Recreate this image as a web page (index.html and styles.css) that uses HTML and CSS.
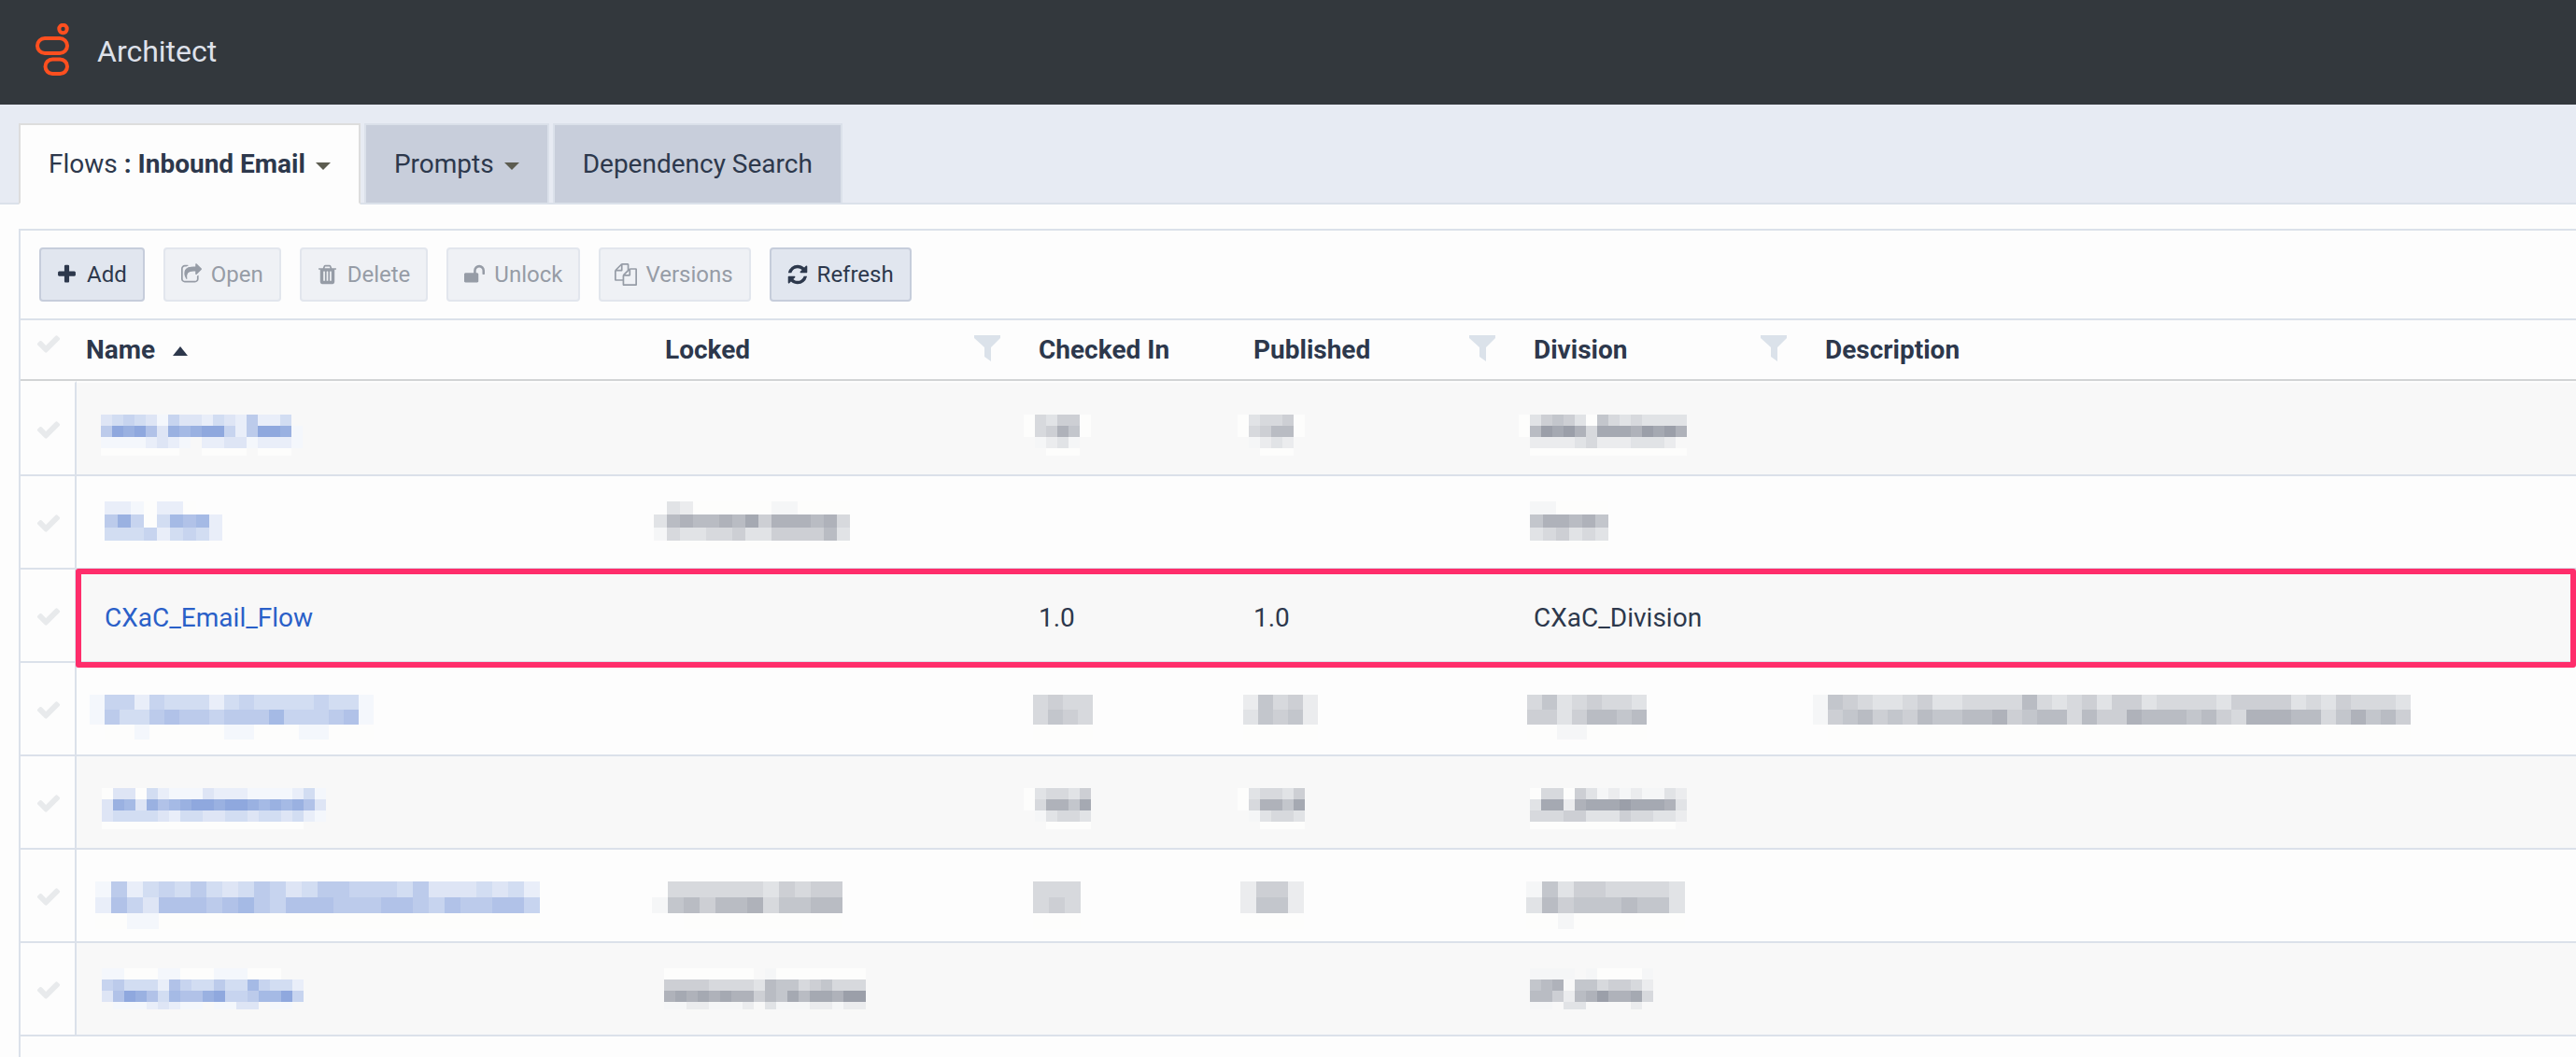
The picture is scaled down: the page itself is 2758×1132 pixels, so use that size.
FILE: index.html
```html
<!DOCTYPE html>
<html lang="en">
<head>
<meta charset="utf-8">
<title>Architect</title>
<link rel="stylesheet" href="styles.css">
</head>
<body>
<svg class="defs" aria-hidden="true">
  <symbol id="check" viewBox="0 0 1792 1792"><path d="M1671 566q0 40-28 68l-724 724-136 136q-28 28-68 28t-68-28l-136-136-362-362q-28-28-28-68t28-68l136-136q28-28 68-28t68 28l294 295 656-657q28-28 68-28t68 28l136 136q28 28 28 68z"/></symbol>
  <symbol id="funnel" viewBox="0 0 28 28"><path d="M0 0h28v3l-10 10v15l-7-5v-10L0 3z"/></symbol>
  <symbol id="caret" viewBox="0 0 16 8"><path d="M0 0h16L8 8z"/></symbol>
</svg>

<header class="topbar">
  <svg class="logo" viewBox="0 0 36 56" aria-hidden="true">
    <circle cx="29.5" cy="6" r="4.2"/>
    <rect x="2" y="16" width="32" height="16" rx="8"/>
    <rect x="10.500" y="38.500" width="23.500" height="15.500" rx="7.700"/>
  </svg>
  <h1 class="title">Architect</h1>
</header>

<nav class="tabs">
  <button class="tab active" type="button"><span>Flows <b>: Inbound Email</b></span><svg class="caret"><use href="#caret"/></svg></button>
  <button class="tab" type="button"><span>Prompts</span><svg class="caret"><use href="#caret"/></svg></button>
  <button class="tab" type="button">Dependency Search</button>
</nav>

<main class="panel">
  <div class="toolbar">
    <button class="btn" type="button"><svg width="19" height="24" viewBox="192 0 1408 1792"><path d="M1600 736v192q0 40-28 68t-68 28h-416v416q0 40-28 68t-68 28h-192q-40 0-68-28t-28-68v-416h-416q-40 0-68-28t-28-68v-192q0-40 28-68t68-28h416v-416q0-40 28-68t68-28h192q40 0 68 28t28 68v416h416q40 0 68 28t28 68z"/></svg>Add</button>
    <button class="btn" type="button" disabled><svg class="wide" width="22" height="24" viewBox="64 0 1664 1792"><path d="M1472 989v259q0 119-84.500 203.500t-203.500 84.500h-832q-119 0-203.500-84.500t-84.500-203.500v-832q0-119 84.500-203.500t203.500-84.500h255q13 0 22.500 9.500t9.500 22.500q0 27-26 32-77 26-133 60-10 4-16 4h-112q-66 0-113 47t-47 113v832q0 66 47 113t113 47h832q66 0 113-47t47-113v-214q0-19 18-29 28-13 54-37 16-16 35-8 21 9 21 29zm237-496l-384 384q-18 19-45 19-12 0-25-5-39-17-39-59v-192h-160q-323 0-438 131-119 137-74 473 3 23-20 34-8 2-12 2-16 0-26-13-10-14-21-31t-39.500-68.500-49.500-99.500-38.500-114-17.500-122q0-49 3.500-91t14-90 28-88 47-81.500 68.500-74 94.500-61.500 124.500-48.500 159.500-30.500 196.500-11h160v-192q0-42 39-59 13-5 25-5 26 0 45 19l384 384q19 19 19 45t-19 45z"/></svg>Open</button>
    <button class="btn" type="button" disabled><svg width="19" height="24" viewBox="192 0 1408 1792"><path d="M704 1376v-704q0-14-9-23t-23-9h-64q-14 0-23 9t-9 23v704q0 14 9 23t23 9h64q14 0 23-9t9-23zm256 0v-704q0-14-9-23t-23-9h-64q-14 0-23 9t-9 23v704q0 14 9 23t23 9h64q14 0 23-9t9-23zm256 0v-704q0-14-9-23t-23-9h-64q-14 0-23 9t-9 23v704q0 14 9 23t23 9h64q14 0 23-9t9-23zm-544-992h448l-48-117q-7-9-17-11h-317q-10 2-17 11zm928 32v64q0 14-9 23t-23 9h-96v948q0 83-47 143.500t-113 60.500h-832q-66 0-113-58.500t-47-141.500v-952h-96q-14 0-23-9t-9-23v-64q0-14 9-23t23-9h309l70-167q15-37 54-63t79-26h320q40 0 79 26t54 63l70 167h309q14 0 23 9t9 23z"/></svg>Delete</button>
    <button class="btn" type="button" disabled><svg class="wide" width="22" height="24" viewBox="64 0 1664 1792"><path d="M1728 576v256q0 26-19 45t-45 19h-64q-26 0-45-19t-19-45v-256q0-106-75-181t-181-75-181 75-75 181v192h96q40 0 68 28t28 68v576q0 40-28 68t-68 28h-960q-40 0-68-28t-28-68v-576q0-40 28-68t68-28h672v-192q0-185 131.500-316.500t316.500-131.500 316.500 131.500 131.500 316.500z"/></svg>Unlock</button>
    <button class="btn" type="button" disabled><svg class="widest" width="24" height="24" viewBox="0 0 1792 1792"><path d="M1696 384q40 0 68 28t28 68v1216q0 40-28 68t-68 28h-960q-40 0-68-28t-28-68v-288h-544q-40 0-68-28t-28-68v-672q0-40 20-88t48-76l408-408q28-28 76-48t88-20h416q40 0 68 28t28 68v328q68-40 128-40h416zm-544 213l-299 299h299v-299zm-640-384l-299 299h299v-299zm196 647l316-316v-416h-384v416q0 40-28 68t-68 28h-416v640h512v-256q0-40 20-88t48-76zm956 804v-1152h-384v416q0 40-28 68t-68 28h-416v640h896z"/></svg>Versions</button>
    <button class="btn" type="button"><svg class="wide" width="22" height="24" viewBox="128 0 1536 1792"><path d="M1639 1056q0 5-1 7-64 268-268 434.500t-478 166.500q-146 0-282.500-55t-243.500-157l-129 129q-19 19-45 19t-45-19-19-45v-448q0-26 19-45t45-19h448q26 0 45 19t19 45-19 45l-137 137q71 66 161 102t187 36q134 0 250-65t186-179q11-17 53-117 8-23 30-23h192q13 0 22.500 9.500t9.500 22.500zm25-800v448q0 26-19 45t-45 19h-448q-26 0-45-19t-19-45 19-45l138-138q-148-137-349-137-134 0-250 65t-186 179q-11 17-53 117-8 23-30 23h-199q-13 0-22.500-9.500t-9.500-22.500v-7q65-268 270-434.500t480-166.500q146 0 284 55.500t245 156.500l130-129q19-19 45-19t45 19 19 45z"/></svg>Refresh</button>
  </div>

  <table class="flows">
    <colgroup><col class="c-check"><col class="c-name"><col class="c-locked"><col class="c-checked"><col class="c-published"><col class="c-division"><col></colgroup>
    <thead>
      <tr>
        <th class="pick"><label><input type="checkbox" aria-label="Select all"><svg><use href="#check"/></svg></label></th>
        <th>Name <svg class="sort" viewBox="0 0 16 10"><path d="M0 10h16L8 0z"/></svg></th>
        <th><div class="head"><span>Locked</span><svg class="funnel"><use href="#funnel"/></svg></div></th>
        <th>Checked In</th>
        <th><div class="head"><span>Published</span><svg class="funnel"><use href="#funnel"/></svg></div></th>
        <th><div class="head"><span>Division</span><svg class="funnel"><use href="#funnel"/></svg></div></th>
        <th>Description</th>
      </tr>
    </thead>
    <tbody>
      <tr>
        <td class="pick"><label><input type="checkbox" aria-label="Select flow 1"><svg><use href="#check"/></svg></label></td>
        <td class="masked"><svg class="blue" data-cell="12" data-x="26" data-rows="23432042213215113. 598962878994159980 00001210.112201110 wwwwwww..wwww.www."></svg></td>
        <td></td>
        <td class="masked"><svg data-cell="12" data-x="-6" data-rows="w3244w w3475w .0120. ..www."></svg></td>
        <td class="masked"><svg data-cell="12" data-x="-7" data-rows="w2334w w3466w .0121. ..www."></svg></td>
        <td class="masked"><svg data-cell="12" data-x="-6" data-rows="w24542w53232222. w69897388879897. .1111231112221.. .wwwwwwwwwwwwww."></svg></td>
        <td></td>
      </tr>
      <tr class="high">
        <td class="pick"><label><input type="checkbox" aria-label="Select flow 2"><svg><use href="#check"/></svg></label></td>
        <td class="masked"><svg class="blue" data-cell="14" data-x="30" data-rows="110w11w.. 584w37671 333413431 wwwwwwww."></svg></td>
        <td class="masked"><svg data-cell="14" data-x="-2" data-rows=".21wwwwww00wwww 267667684777673 032233422444462 .wwwwwwwwwwwwww"></svg></td>
        <td></td>
        <td></td>
        <td class="masked"><svg data-cell="14" data-x="6" data-rows="00wwww 577675 234232 wwwwww"></svg></td>
        <td></td>
      </tr>
      <tr class="marked">
        <td class="pick"><label><input type="checkbox" aria-label="Select CXaC_Email_Flow"><svg><use href="#check"/></svg></label></td>
        <td class="name"><a href="#">CXaC_Email_Flow</a></td>
        <td></td>
        <td>1.0</td>
        <td>1.0</td>
        <td>CXaC_Division</td>
        <td></td>
      </tr>
      <tr>
        <td class="pick"><label><input type="checkbox" aria-label="Select flow 4"><svg><use href="#check"/></svg></label></td>
        <td class="masked"><svg class="blue" data-cell="16" data-x="14" data-rows="0441433313433334330 0533565545557444560 .ww0wwwww00www00www"></svg></td>
        <td></td>
        <td class="masked"><svg data-cell="16" data-x="4" data-rows="3433 3543 wwww"></svg></td>
        <td class="masked"><svg data-cell="16" data-x="-1" data-rows="15341 25451 wwwww"></svg></td>
        <td class="masked"><svg data-cell="16" data-x="3" data-rows="35234332 44246656 ww00wwww"></svg></td>
        <td class="masked"><svg data-cell="16" data-x="-3" data-rows="0543223422333363234244233332444423243332 0456454655667456636447666564377766357564 .wwwwwwwwwwwwwwwwwwwwwwwwwwwwwwwwwwwwwww"></svg></td>
      </tr>
      <tr>
        <td class="pick"><label><input type="checkbox" aria-label="Select flow 5"><svg><use href="#check"/></svg></label></td>
        <td class="masked"><svg class="blue" data-cell="12" data-x="27" data-rows="w22w3100021110000130 28728678998998787862 23333213322332332310 wwwwwwwwwwwwwwwwww.."></svg></td>
        <td></td>
        <td class="masked"><svg data-cell="12" data-x="-6" data-rows="w23324 w37758 .02332 ..wwww"></svg></td>
        <td class="masked"><svg data-cell="12" data-x="-7" data-rows="w23324 w37758 .02332 ..wwww"></svg></td>
        <td class="masked"><svg data-cell="12" data-x="6" data-rows="w33w4201010021 28817888988872 33344222433221 wwwwwwwwwwwww."></svg></td>
        <td></td>
      </tr>
      <tr>
        <td class="pick"><label><input type="checkbox" aria-label="Select flow 6"><svg><use href="#check"/></svg></label></td>
        <td class="masked"><svg class="blue" data-cell="17" data-x="20" data-rows="0513435323542355444352223231 1642666567546665556654655664 ww00wwwwwwwwwwwwwwwwwwwwwwww"></svg></td>
        <td class="masked"><svg data-cell="17" data-x="-4" data-rows=".33333324344 056466735566 ..wwwwwwwwww"></svg></td>
        <td class="masked"><svg data-cell="17" data-x="4" data-rows="333 343 www"></svg></td>
        <td class="masked"><svg data-cell="17" data-x="-4" data-rows="1441 1551 wwww"></svg></td>
        <td class="masked"><svg data-cell="17" data-x="2" data-rows="0524433332 2645556552 ww0wwwwwww"></svg></td>
        <td></td>
      </tr>
      <tr class="high">
        <td class="pick"><label><input type="checkbox" aria-label="Select flow 7"><svg><use href="#check"/></svg></label></td>
        <td class="masked"><svg class="blue" data-cell="12" data-x="27" data-rows="00www00www000www.. 453331643353374331 269863766894457794 .00012100.0022.00."></svg></td>
        <td class="masked"><svg data-cell="12" data-x="9" data-rows="wwwwwwww.0wwwwwwww 444433332655345333 787878774658688799 00110001.200011011"></svg></td>
        <td></td>
        <td></td>
        <td class="masked"><svg data-cell="12" data-x="6" data-rows="0000.0wwww0 567.5534431 66416797783 00.22....1."></svg></td>
        <td></td>
      </tr>
    </tbody>
  </table>
</main>
<script src="mosaic.js"></script>
</body>
</html>
```
FILE: styles.css
```css
* { box-sizing: border-box; }

body {
  margin: 0;
  min-height: 100vh;
  display: flex;
  flex-direction: column;
  background: #fdfdfd;
  color: #2d384c;
  font: 28px/32px Roboto, "Liberation Sans", sans-serif;
}

button { font: inherit; color: inherit; margin: 0; }
svg { display: block; flex: none; fill: currentColor; }
.defs { position: absolute; width: 0; height: 0; }

.topbar {
  display: flex;
  align-items: center;
  gap: 30px;
  height: 112px;
  padding: 0 38px 6px;
  background: #33383d;
}
.logo { width: 36px; height: 56px; fill: none; stroke: #ff4f1f; stroke-width: 4; }
.title { margin: 0; padding-top: 4px; font-size: 32px; font-weight: 400; color: #dee1ea; }

.tabs {
  display: flex;
  gap: 4px;
  padding: 20px 20px 0;
  background: #e7ebf3;
  box-shadow: inset 0 -2px #dbe1ea;
}
.tab {
  display: flex;
  align-items: center;
  gap: 11px;
  height: 87px;
  padding: 0 30px;
  border: 2px solid #dbe1ea;
  background: #c8cedb;
}
.tab.active { background: #fdfdfd; border-color: #ddd; border-bottom-color: #fdfdfd; }
.caret { width: 16px; height: 8px; margin-top: 4px; color: #5c5c50; }

.panel {
  flex: 1;
  margin: 26px 0 0 20px;
  border: solid #dbe1ea;
  border-width: 2px 0 0 2px;
}
.toolbar {
  display: flex;
  gap: 20px;
  padding: 18px 20px;
  border-bottom: 2px solid #dbe1ea;
}
.btn {
  display: flex;
  align-items: center;
  gap: 12px;
  height: 58px;
  padding: 0 17px 0 18px;
  border: 2px solid #c6cddb;
  border-radius: 4px;
  background: #e1e6ef;
  font-size: 24px;
}
.btn:disabled { background: #eff1f5; border-color: #e2e6ed; color: #969ca6; }
.btn .wide { margin: 0 -2px 0 -1px; }
.btn .widest { margin: 0 -3px; }

.flows { width: 100%; table-layout: fixed; border-collapse: separate; border-spacing: 0; }
.c-check { width: 60px; }
.c-name { width: 620px; }
.c-locked { width: 400px; }
.c-checked { width: 230px; }
.c-published { width: 300px; }
.c-division { width: 312px; }

th {
  height: 65px;
  padding: 0 10px;
  border-bottom: 2px solid #d2d4d5;
  text-align: left;
  font-weight: 700;
}
.head { display: flex; align-items: center; justify-content: space-between; }
.funnel { width: 28px; height: 28px; margin: 0 21px 4px 0; color: #dbe2ea; }
.sort { display: inline-block; width: 16px; height: 10px; margin-left: 12px; vertical-align: 3px; }

td { height: 100px; padding: 6px 10px 0; border-bottom: 2px solid #dbe1ea; }
tbody tr:first-child td { height: 102px; border-top: 2px solid #fdfdfd; }
tbody tr:nth-child(odd) td { background: #f8f8f8; }
tbody tr td.pick { background: #fdfdfd; border-right: 2px solid #dbe1ea; }
.pick { padding: 2px 0 0 16px; }
th.pick { padding: 0 0 14px 16px; }
.pick label { position: relative; display: block; width: 28px; height: 28px; color: #e8eaec; }
.pick svg { width: 28px; height: 28px; }
.pick input { position: absolute; inset: 0; width: 28px; height: 28px; margin: 0; appearance: none; }
.name { padding-left: 30px; }
a { color: #2a60c8; text-decoration: none; }

.masked { padding: 34px 0 0; vertical-align: top; }
.high .masked { padding-top: 27px; }
.masked svg { width: 100%; height: 56px; overflow: visible; shape-rendering: crispEdges; }

.marked { position: relative; }
.marked td:last-child::after {
  content: "";
  position: absolute;
  inset: -1px 0 -5px 59px;
  border: 6px solid #ff2d6b;
  border-radius: 3px;
  pointer-events: none;
}
```
FILE: mosaic.js
```js
// Fills masked cells with a grid of squares; each digit is a shade, "w" is near white.
const LIGHT = { blue: [244, 247, 252], grey: [245, 246, 247] };
const DARK = { blue: [143, 168, 222], grey: [155, 159, 169] };

document.querySelectorAll("svg[data-rows]").forEach((svg) => {
  const tone = svg.classList.contains("blue") ? "blue" : "grey";
  const size = Number(svg.dataset.cell);
  const left = Number(svg.dataset.x);
  svg.dataset.rows.split(" ").forEach((row, y) => {
    [...row].forEach((mark, x) => {
      if (mark === ".") return;
      const rect = document.createElementNS("http://www.w3.org/2000/svg", "rect");
      rect.setAttribute("x", left + x * size);
      rect.setAttribute("y", y * size);
      rect.setAttribute("width", size);
      rect.setAttribute("height", y === 3 ? 8 : size);
      const shade = LIGHT[tone].map((v, i) => Math.round(v + (DARK[tone][i] - v) * (mark / 9)));
      rect.setAttribute("fill", mark === "w" ? "#fdfdfc" : `rgb(${shade})`);
      svg.append(rect);
    });
  });
});
```
